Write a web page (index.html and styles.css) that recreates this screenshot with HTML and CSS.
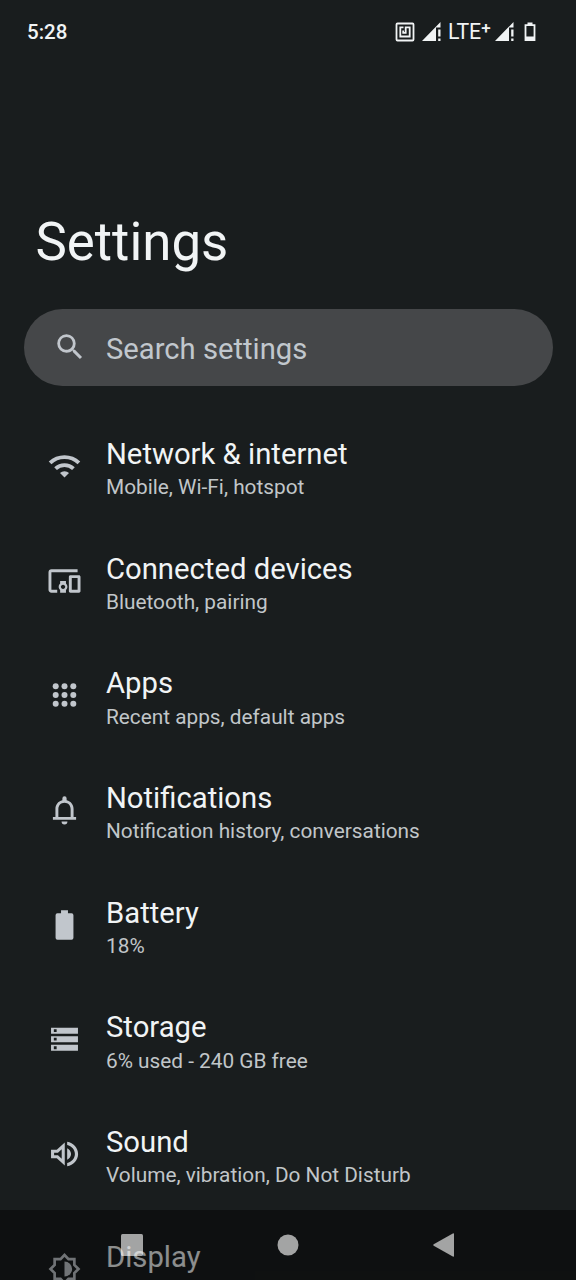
FILE: index.html
```html
<!DOCTYPE html>
<html lang="en">
<head>
<meta charset="utf-8">
<title>Settings</title>
<link rel="stylesheet" href="styles.css">
</head>
<body>
<div class="screen">
  <header class="status">
    <span class="clock">5:28</span>
    <div class="indicators">
      <svg class="nfc" viewBox="0 0 20 20" fill="none" stroke="currentColor" stroke-width="1.800"><rect x="1.500" y="1.500" width="17" height="17" rx="1"/><path d="M8.500 5.300H5.300V14.500H14.700V5.300H10.700V10.800H8.200V8.500"/></svg>
      <svg class="signal" viewBox="0 0 20 20" fill="currentColor"><path d="M0 19 18.500 0V5.500H14V19Z"/><path d="M16.200 7.500h2.300v7h-2.300zM16.200 16.500h2.300v2.500h-2.300z"/></svg>
      <span class="lte">LTE<span class="plus">+</span></span>
      <svg class="signal" viewBox="0 0 20 20" fill="currentColor"><path d="M0 19 18.500 0V5.500H14V19Z"/><path d="M16.200 7.500h2.300v7h-2.300zM16.200 16.500h2.300v2.500h-2.300z"/></svg>
      <svg class="cell" viewBox="0 0 12 20"><path d="M1.500 3.200H10.500V18H1.500Z" fill="none" stroke="currentColor" stroke-width="1.800"/><path d="M3.500.500h5v3h-5zM1 14.500h10V19H1z" fill="currentColor"/></svg>
    </div>
  </header>
  <main>
    <h1 class="title">Settings</h1>
    <div class="search">
      <svg class="icon" viewBox="0 0 24 24"><path d="M15.500 14h-.790l-.280-.270A6.471 6.471 0 0 0 16 9.500 6.500 6.500 0 1 0 9.500 16c1.610 0 3.090-.590 4.230-1.570l.270.280v.790l5 4.990L20.490 19l-4.990-5zm-6 0C7.010 14 5 11.990 5 9.500S7.010 5 9.500 5 14 7.010 14 9.500 11.990 14 9.500 14z"/></svg>
      <span>Search settings</span>
    </div>
    <ul class="list">
      <li class="row">
        <svg class="icon" viewBox="0 0 24 24"><g fill="none" stroke="currentColor" stroke-width="2.900"><path d="M1.200 9.700a15.500 15.500 0 0 1 21.600 0"/><path d="M5.300 14a9.700 9.700 0 0 1 13.400 0"/></g><path d="M12 20.700 8.600 17.200a5 5 0 0 1 6.800 0z"/></svg>
        <div class="text"><div class="name">Network &amp; internet</div><div class="detail">Mobile, Wi-Fi, hotspot</div></div>
      </li>
      <li class="row">
        <svg class="icon" viewBox="1 1 22 22"><path d="M3 6h18V4H3c-1.100 0-2 .900-2 2v12c0 1.100.900 2 2 2h4v-2H3V6zm10 6H9v1.780c-.610.550-1 1.330-1 2.220s.390 1.670 1 2.220V20h4v-1.780c.610-.550 1-1.340 1-2.220s-.390-1.670-1-2.220V12zm-2 5.500c-.830 0-1.500-.670-1.500-1.500s.670-1.500 1.500-1.500 1.500.670 1.500 1.500-.670 1.500-1.500 1.500zM22 8h-6c-.500 0-1 .500-1 1v10c0 .500.500 1 1 1h6c.500 0 1-.500 1-1V9c0-.500-.500-1-1-1zm-1 10h-4v-8h4v8z"/></svg>
        <div class="text"><div class="name">Connected devices</div><div class="detail">Bluetooth, pairing</div></div>
      </li>
      <li class="row">
        <svg class="icon" viewBox="0 0 24 24"><circle cx="5.400" cy="5.400" r="2.250"/><circle cx="12" cy="5.400" r="2.250"/><circle cx="18.600" cy="5.400" r="2.250"/><circle cx="5.400" cy="12" r="2.250"/><circle cx="12" cy="12" r="2.250"/><circle cx="18.600" cy="12" r="2.250"/><circle cx="5.400" cy="18.600" r="2.250"/><circle cx="12" cy="18.600" r="2.250"/><circle cx="18.600" cy="18.600" r="2.250"/></svg>
        <div class="text"><div class="name">Apps</div><div class="detail">Recent apps, default apps</div></div>
      </li>
      <li class="row">
        <svg class="icon" viewBox="0 0 24 24"><path d="M18.800 17.300v-6c0-3.300-1.900-6-5.200-6.700V3.300a1.600 1.600 0 0 0-3.200 0v1.300C7.100 5.300 5.200 8 5.200 11.300v6H3.300v2.100h17.400v-2.100zm-2.200 0H7.400v-6c0-2.700 1.800-4.800 4.600-4.800s4.600 2.100 4.600 4.800zM12 22.800a2.200 2.200 0 0 0 2.200-2.200H9.800a2.200 2.200 0 0 0 2.200 2.200z"/></svg>
        <div class="text"><div class="name">Notifications</div><div class="detail">Notification history, conversations</div></div>
      </li>
      <li class="row">
        <svg class="icon" viewBox="0 0 24 24"><path d="M17.300 3.200H14.600V1H9.400v2.200H6.700A1.400 1.400 0 0 0 5.300 4.600V21.600A1.400 1.400 0 0 0 6.700 23H17.300a1.400 1.400 0 0 0 1.400-1.400V4.600a1.400 1.400 0 0 0-1.400-1.400z"/></svg>
        <div class="text"><div class="name">Battery</div><div class="detail">18%</div></div>
      </li>
      <li class="row">
        <svg class="icon" viewBox="0 0 24 24"><path fill-rule="evenodd" d="M1.900 3.500h20.200v4.500H1.900zM4 4.700v2.100h2.100v-2.100zM1.900 9.900h20.200v4.500H1.900zM4 11.100v2.100h2.100v-2.100zM1.900 16.300h20.200v4.500H1.900zM4 17.500v2.100h2.100v-2.100z"/></svg>
        <div class="text"><div class="name">Storage</div><div class="detail">6% used - 240 GB free</div></div>
      </li>
      <li class="row">
        <svg class="icon" viewBox="0 0 24 24"><path fill-rule="evenodd" d="M1.900 8.800v6.400h4.300l6 5.500V3.300l-6 5.500zM9.900 8.500v7L7.100 12.900H4.200v-1.800h2.900zM14 7.700v8.600c1.600-.800 2.900-2.400 2.900-4.300S15.600 8.500 14 7.700zM14 2.800v2.400c3.400.800 5.800 3.600 5.800 6.800s-2.400 6-5.800 6.800v2.400c4.700-.900 8.200-4.600 8.200-9.200s-3.500-8.300-8.200-9.200z"/></svg>
        <div class="text"><div class="name">Sound</div><div class="detail">Volume, vibration, Do Not Disturb</div></div>
      </li>
      <li class="row">
        <svg class="icon" viewBox="0 0 24 24"><path d="M12 1.500 15 4.600H19.400V9L22.500 12 19.400 15V19.400H15L12 22.500 9 19.400H4.600V15L1.500 12 4.600 9V4.600H9Z" fill="none" stroke="currentColor" stroke-width="2"/><path d="M12 6.300a5.700 5.700 0 0 1 0 11.400z"/></svg>
        <div class="text"><div class="name">Display</div></div>
      </li>
    </ul>
  </main>
  <nav class="navbar">
    <svg viewBox="0 0 24 24"><rect x="1" y="1" width="22" height="22" rx="1.500"/></svg>
    <svg viewBox="0 0 24 24"><circle cx="12" cy="12" r="10.500"/></svg>
    <svg viewBox="0 0 24 24"><path d="M1.700 11.200 20.800.400Q22 0 22 1V23Q22 24 20.800 23.600L1.700 12.800Q.600 12 1.700 11.200Z"/></svg>
  </nav>
</div>
</body>
</html>
```
FILE: styles.css
```css
* { box-sizing: border-box; }
body {
  margin: 0;
  background: #191d1e;
  color: #f1f4f5;
  font-family: Roboto, "Liberation Sans", sans-serif;
}
.screen {
  position: relative;
  width: 576px;
  height: 1280px;
  overflow: hidden;
}
.status {
  display: flex;
  justify-content: space-between;
  height: 64px;
  padding: 0 40px 0 27px;
  align-items: center;
}
.clock { font-size: 20.5px; font-weight: 500; }
.indicators { display: flex; align-items: center; height: 24px; }
.indicators svg { display: block; height: 20px; flex: none; }
.nfc { width: 20px; margin-right: 7px; }
.signal { width: 20px; }
.lte {
  width: 46px;
  margin: -1px 1px 0 6px;
  font-size: 21.3px;
  letter-spacing: -0.1px;
  line-height: 24px;
  white-space: nowrap;
}
.plus { font-size: 17px; font-weight: 500; vertical-align: 5px; line-height: 0; }
.cell { width: 12px; margin-left: 9px; }
.title {
  margin: 0;
  padding: 147px 0 0 35.5px;
  font-size: 52.8px;
  font-weight: 400;
  line-height: 62px;
}
.search {
  display: flex;
  align-items: center;
  height: 77px;
  margin: 36px 23.5px 0;
  padding-left: 29px;
  gap: 19.5px;
  border-radius: 39px;
  background: #454749;
  color: #c1c7cd;
  font-size: 29.2px;
}
.search .icon { width: 34px; height: 34px; margin-top: -1px; }
.search span { padding-top: 3px; }
.icon {
  width: 33px;
  height: 32px;
  flex: none;
  fill: currentColor;
  color: #c1c6cc;
}
.list { margin: 23px 0 0; padding: 0; list-style: none; }
.row {
  display: flex;
  height: 114.7px;
  padding: 28px 0 0 48px;
  gap: 25px;
}
.row .icon { margin-top: 13px; }
.name { font-size: 29.25px; line-height: 34px; white-space: nowrap; }
.detail {
  margin-top: 4.2px;
  color: #c1c6c9;
  font-size: 20.8px;
  line-height: 24px;
  white-space: nowrap;
}
.navbar {
  position: absolute;
  left: 0;
  right: 0;
  bottom: 0;
  height: 70px;
  display: flex;
  justify-content: center;
  align-items: center;
  gap: 132px;
  background: rgba(0, 0, 0, 0.42);
}
.navbar svg { width: 24px; height: 24px; fill: rgba(255, 255, 255, 0.62); }
```
